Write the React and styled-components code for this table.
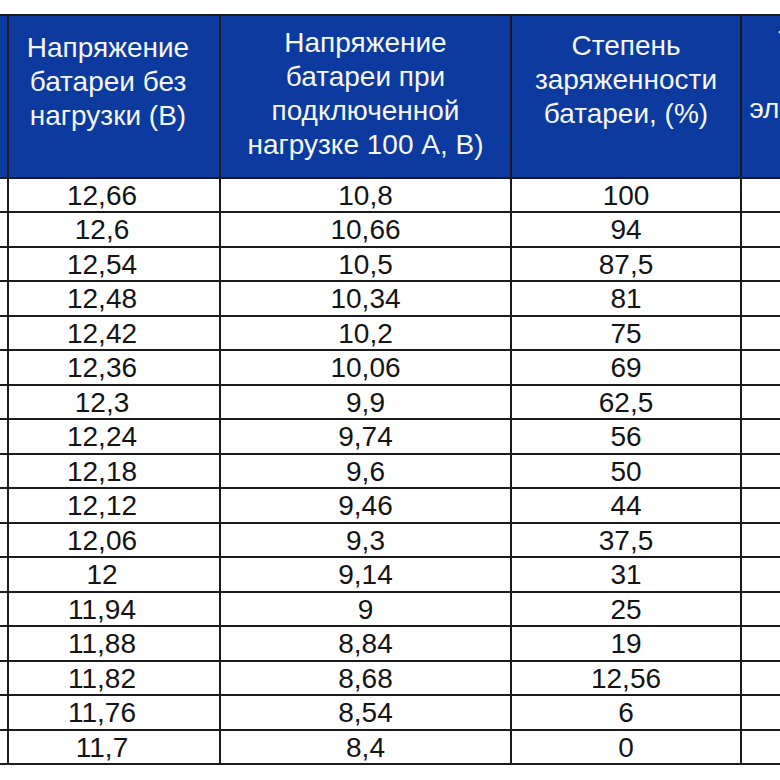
import React from 'react';
import styled, { createGlobalStyle } from 'styled-components';

const GlobalStyle = createGlobalStyle`
  html, body {
    margin: 0;
    padding: 0;
    background: #ffffff;
    overflow: hidden;
  }
  body {
    font-family: "Liberation Sans", Arial, sans-serif;
  }
`;

const Page = styled.div`
  width: 780px;
  height: 780px;
  overflow: hidden;
  padding-top: 14px;
  box-sizing: border-box;
`;

const Table = styled.div`
  display: grid;
  grid-template-columns: 100px 210px 289px 228px 237px;
  grid-template-rows: 161px repeat(17, 32.47px);
  gap: 2px;
  width: max-content;
  margin-left: -95px;
  background: #1b1b1f;
  border: 2px solid #1b1b1f;
`;

const HeadCell = styled.div`
  background: #0c3a9e;
  color: #f4f6fb;
  font-size: 28px;
  line-height: 34px;
  text-align: center;
  padding: ${(p) => p.$top || 14}px ${(p) => p.$right || 0}px 0 ${(p) => p.$left || 0}px;
  white-space: nowrap;
  overflow: hidden;
`;

const Cell = styled.div`
  background: #ffffff;
  color: #141414;
  font-size: 28px;
  line-height: 33px;
  text-align: center;
  padding-right: ${(p) => p.$right || 0}px;
`;

const rows = [
  ['12,66', '10,8', '100'],
  ['12,6', '10,66', '94'],
  ['12,54', '10,5', '87,5'],
  ['12,48', '10,34', '81'],
  ['12,42', '10,2', '75'],
  ['12,36', '10,06', '69'],
  ['12,3', '9,9', '62,5'],
  ['12,24', '9,74', '56'],
  ['12,18', '9,6', '50'],
  ['12,12', '9,46', '44'],
  ['12,06', '9,3', '37,5'],
  ['12', '9,14', '31'],
  ['11,94', '9', '25'],
  ['11,88', '8,84', '19'],
  ['11,82', '8,68', '12,56'],
  ['11,76', '8,54', '6'],
  ['11,7', '8,4', '0'],
];

const App = () => (
  <>
    <GlobalStyle />
    <Page>
      <Table>
        <HeadCell />
        <HeadCell $top={15} $right={12}>
          Напряжение<br />батареи без<br />нагрузки (В)
        </HeadCell>
        <HeadCell $top={10}>
          Напряжение<br />батареи при<br />подключенной<br />нагрузке 100 А, В)
        </HeadCell>
        <HeadCell $top={13}>
          Степень<br />заряженности<br />батареи, (%)
        </HeadCell>
        <HeadCell $top={8} $left={5}>
          Температура<br />замерзания<br />электролита, (°С)
        </HeadCell>
        {rows.map((r, i) => (
          <React.Fragment key={i}>
            <Cell />
            <Cell $right={24}>{r[0]}</Cell>
            <Cell>{r[1]}</Cell>
            <Cell>{r[2]}</Cell>
            <Cell />
          </React.Fragment>
        ))}
      </Table>
    </Page>
  </>
);

export default App;
